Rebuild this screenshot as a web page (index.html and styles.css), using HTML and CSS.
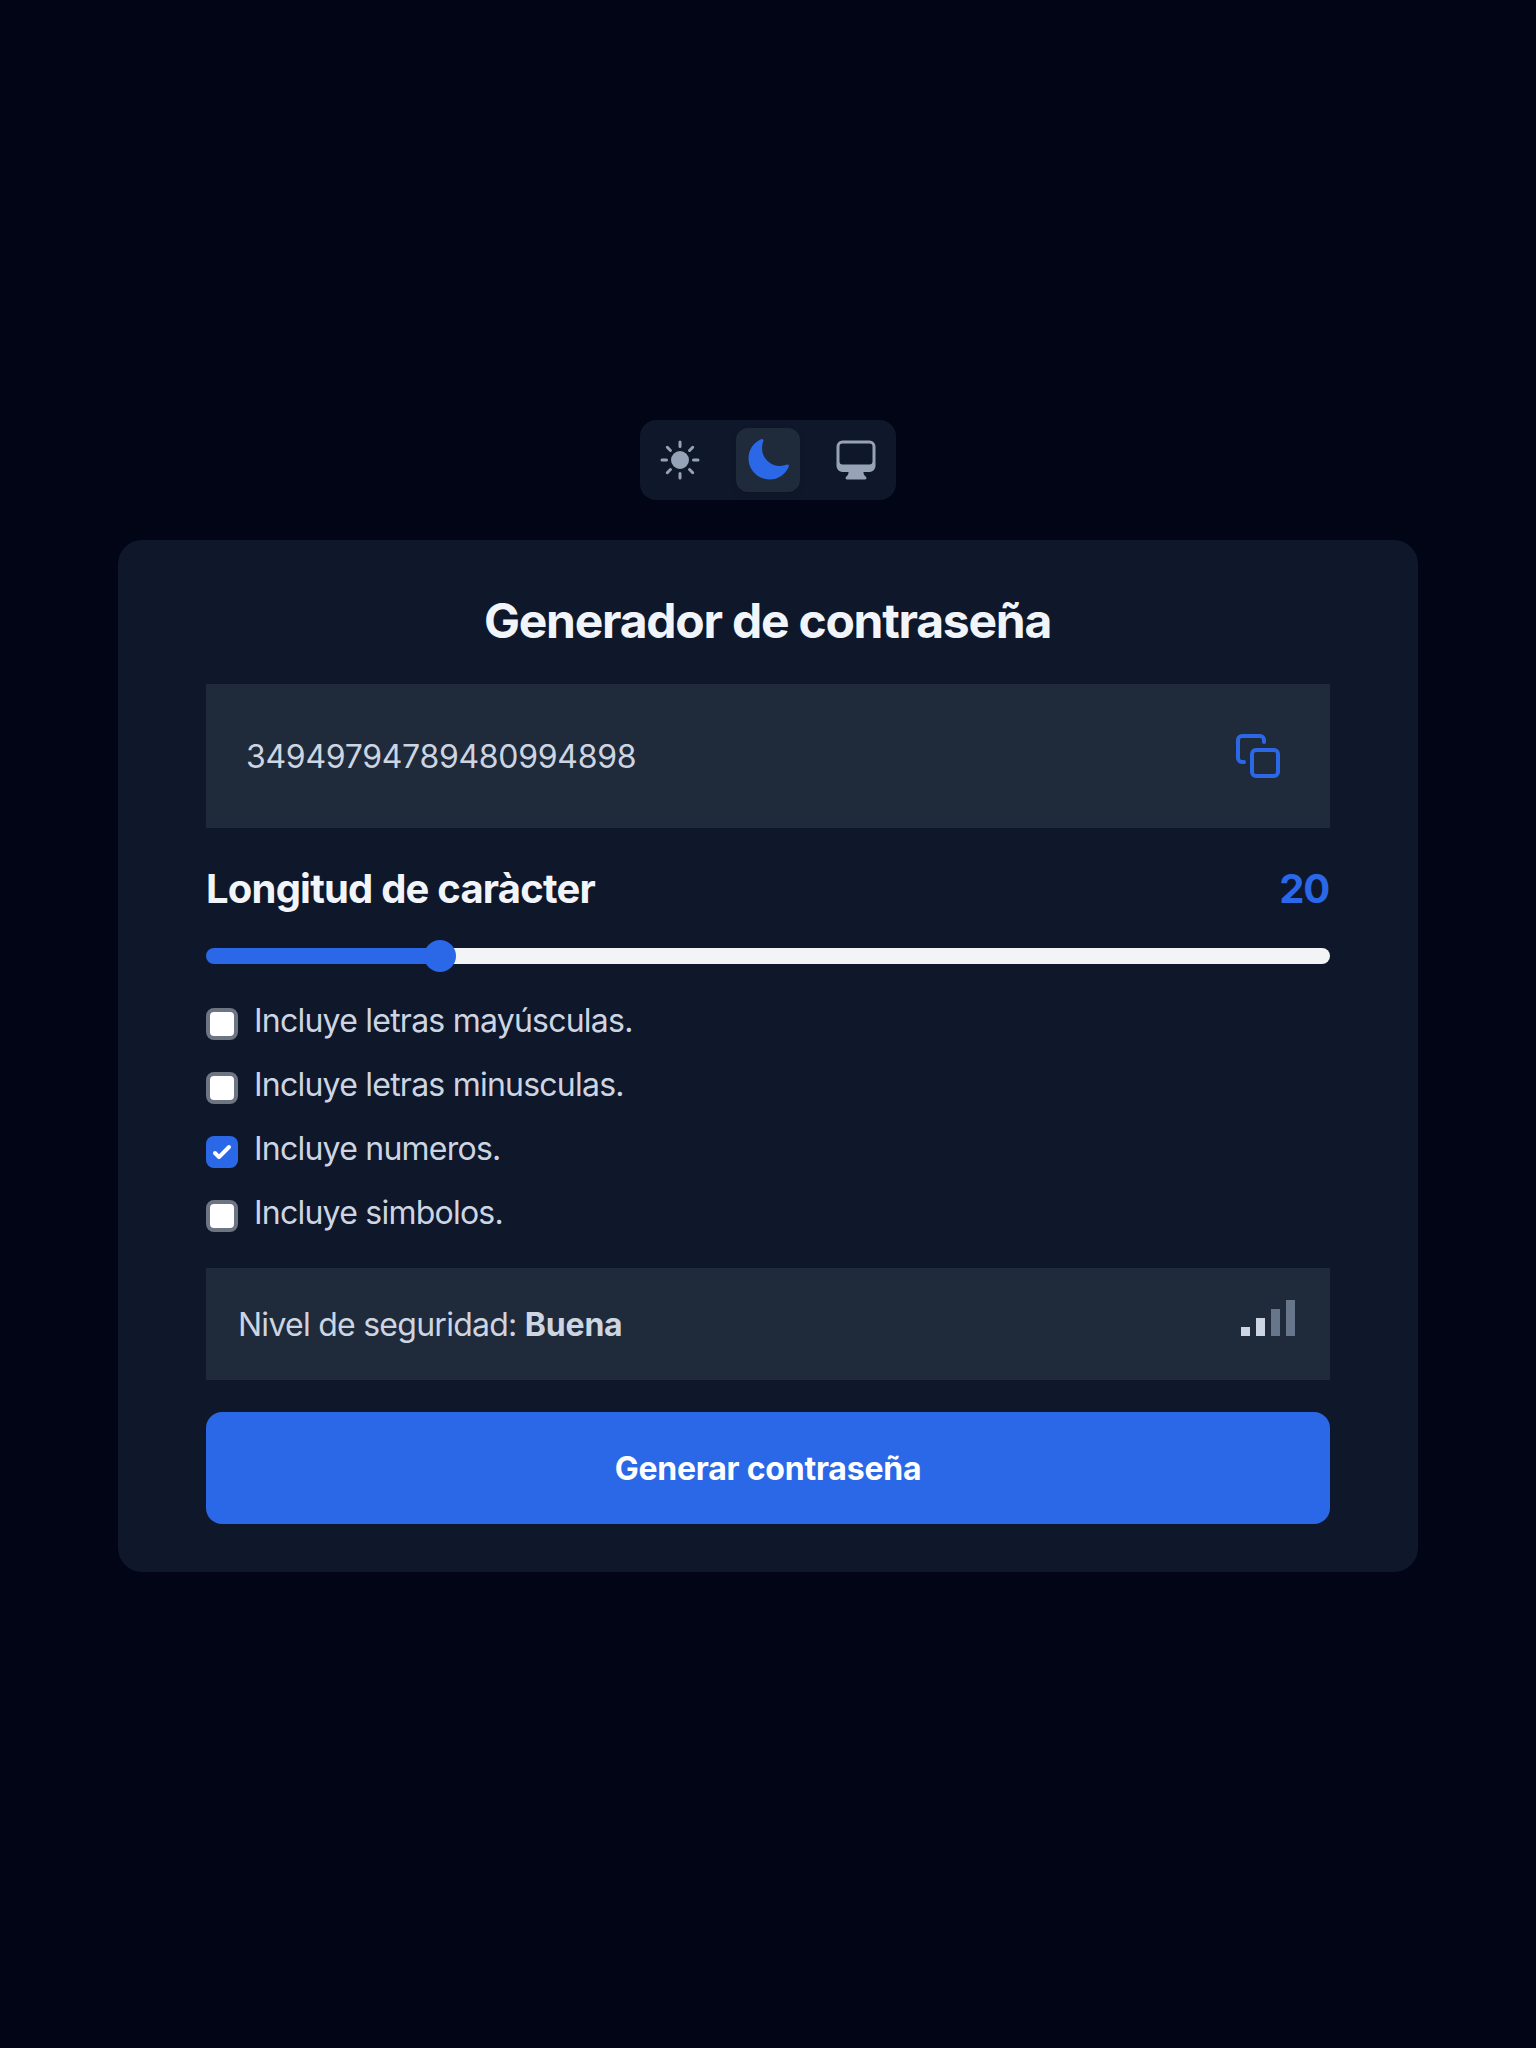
FILE: index.html
```html
<!DOCTYPE html>
<html lang="es">
<head>
<meta charset="utf-8">
<title>Generador de contraseña</title>
<link rel="stylesheet" href="styles.css">
</head>
<body>
<main class="page">
  <nav class="themes">
    <button class="theme" aria-label="Claro"><svg viewBox="0 0 24 24" fill="currentColor"><path d="M12 2.25a.75.75 0 0 1 .75.75v2.25a.75.75 0 0 1-1.5 0V3a.75.75 0 0 1 .75-.75ZM7.5 12a4.5 4.5 0 1 1 9 0 4.5 4.5 0 0 1-9 0ZM18.894 6.166a.75.75 0 0 0-1.06-1.06l-1.591 1.59a.75.75 0 1 0 1.06 1.061l1.591-1.59ZM21.75 12a.75.75 0 0 1-.75.75h-2.25a.75.75 0 0 1 0-1.5H21a.75.75 0 0 1 .75.75ZM17.834 18.894a.75.75 0 0 0 1.06-1.06l-1.59-1.591a.75.75 0 1 0-1.061 1.06l1.59 1.591ZM12 18a.75.75 0 0 1 .75.75V21a.75.75 0 0 1-1.5 0v-2.25A.75.75 0 0 1 12 18ZM7.758 17.303a.75.75 0 0 0-1.061-1.06l-1.591 1.59a.75.75 0 0 0 1.06 1.061l1.591-1.59ZM6 12a.75.75 0 0 1-.75.75H3a.75.75 0 0 1 0-1.5h2.25A.75.75 0 0 1 6 12ZM6.697 7.757a.75.75 0 0 0 1.06-1.06l-1.59-1.591a.75.75 0 0 0-1.061 1.06l1.59 1.591Z"/></svg></button>
    <button class="theme theme-active" aria-label="Oscuro"><svg viewBox="0 0 24 24" fill="currentColor"><path d="M9.528 1.718a.75.75 0 0 1 .162.819A8.97 8.97 0 0 0 9 6a9 9 0 0 0 9 9 8.97 8.97 0 0 0 3.463-.69.75.75 0 0 1 .981.98 10.503 10.503 0 0 1-9.694 6.46c-5.799 0-10.5-4.7-10.5-10.5 0-4.368 2.667-8.112 6.46-9.694a.75.75 0 0 1 .818.162Z"/></svg></button>
    <button class="theme" aria-label="Sistema"><svg viewBox="0 0 24 24" fill="currentColor" fill-rule="evenodd"><path d="M2.25 5.25a3 3 0 0 1 3-3h13.5a3 3 0 0 1 3 3V15a3 3 0 0 1-3 3h-3v.257c0 .597.237 1.17.659 1.591l.621.622a.75.75 0 0 1-.53 1.28h-9a.75.75 0 0 1-.53-1.28l.621-.622a2.25 2.25 0 0 0 .659-1.59V18h-3a3 3 0 0 1-3-3V5.25Zm1.5 0v7.5a1.5 1.5 0 0 0 1.5 1.5h13.5a1.5 1.5 0 0 0 1.5-1.5v-7.5a1.5 1.5 0 0 0-1.5-1.5H5.25a1.5 1.5 0 0 0-1.5 1.5Z"/></svg></button>
  </nav>

  <section class="card">
    <h1 class="title">Generador de contraseña</h1>

    <div class="password">
      <span class="password-text">34949794789480994898</span>
      <button class="copy" aria-label="Copiar"><svg viewBox="0 0 24 24" fill="none" stroke="currentColor" stroke-width="2" stroke-linecap="round" stroke-linejoin="round"><rect x="9" y="9" width="13" height="13" rx="2"/><path d="M5 15H4a2 2 0 0 1-2-2V4a2 2 0 0 1 2-2h9a2 2 0 0 1 2 2v1"/></svg></button>
    </div>

    <div class="length">
      <h2 class="length-label">Longitud de caràcter</h2>
      <span class="length-value">20</span>
    </div>
    <div class="slider"><div class="slider-fill" style="width: 250px"></div></div>

    <div class="options">
      <label class="option"><span class="box"></span><span class="option-text">Incluye letras mayúsculas.</span></label>
      <label class="option"><span class="box"></span><span class="option-text">Incluye letras minusculas.</span></label>
      <label class="option"><span class="box box-checked"><svg viewBox="0 0 16 16" fill="#fff"><path d="M12.207 4.793a1 1 0 0 1 0 1.414l-5 5a1 1 0 0 1-1.414 0l-2-2a1 1 0 0 1 1.414-1.414L6.5 9.086l4.293-4.293a1 1 0 0 1 1.414 0z"/></svg></span><span class="option-text">Incluye numeros.</span></label>
      <label class="option"><span class="box"></span><span class="option-text">Incluye simbolos.</span></label>
    </div>

    <div class="strength">
      <p class="strength-text">Nivel de seguridad: <strong>Buena</strong></p>
      <svg class="bars" viewBox="0 0 54 36"><g class="bar-on"><path d="M0 27h9v9H0z"/><path d="M15 18h9v18h-9z"/></g><g class="bar-off"><path d="M30 9h9v27h-9z"/><path d="M45 0h9v36h-9z"/></g></svg>
    </div>

    <button class="generate">Generar contraseña</button>
  </section>
</main>
</body>
</html>
```
FILE: styles.css
```css
* {
  box-sizing: border-box;
  margin: 0;
  padding: 0;
}

body {
  background: #010516;
  color: #cdd5e2;
  font-family: Inter, "Liberation Sans", sans-serif;
  font-size: 32px;
  line-height: 48px;
}

button {
  border: 0;
  background: none;
  font: inherit;
  color: inherit;
}

svg {
  display: block;
}

.page {
  min-height: 2048px;
  padding-top: 420px;
  display: flex;
  flex-direction: column;
  align-items: center;
  gap: 40px;
}

.themes {
  display: flex;
  gap: 24px;
  padding: 8px;
  border-radius: 16px;
  background: #0f172a;
}

.theme {
  padding: 8px;
  border-radius: 12px;
  color: #96a3b6;
}

.theme svg,
.copy svg {
  width: 48px;
  height: 48px;
}

.theme-active {
  background: #1f2a3b;
  color: #2b68e7;
  box-shadow: 0 2px 6px rgba(0, 0, 0, 0.1);
}

.card {
  width: 1300px;
  height: 1032px;
  padding: 48px 88px;
  border-radius: 24px;
  background: #0f172a;
}

.title {
  padding-right: 1px;
  font-size: 48px;
  line-height: 66px;
  font-weight: 700;
  letter-spacing: -1.25px;
  text-align: center;
  color: #f1f5fa;
}

.password {
  display: flex;
  align-items: center;
  justify-content: space-between;
  height: 144px;
  margin-top: 30px;
  padding: 0 48px 0 40px;
  background: #1f2a3b;
}

.password-text {
  padding-top: 2px;
  letter-spacing: -0.3px;
}

.copy {
  color: #2b68e7;
}

.length {
  display: flex;
  justify-content: space-between;
  margin-top: 32px;
  font-size: 40px;
  line-height: 58px;
}

.length-label {
  font-size: inherit;
  font-weight: 700;
  letter-spacing: -0.8px;
  color: #f1f5fa;
}

.length-value {
  padding-right: 1px;
  font-weight: 700;
  letter-spacing: -1.2px;
  color: #2b68e7;
}

.slider {
  height: 16px;
  margin-top: 30px;
  border-radius: 8px;
  background: linear-gradient(to right, #2b68e7 240px, #f3f4f6 240px);
}

.slider-fill {
  display: flex;
  align-items: center;
  justify-content: flex-end;
  height: 16px;
}

.slider-fill::after {
  content: "";
  flex: none;
  width: 32px;
  height: 32px;
  border-radius: 50%;
  background: #2b68e7;
}

.options {
  display: flex;
  flex-direction: column;
  gap: 16px;
  margin-top: 32px;
}

.option {
  display: flex;
  gap: 16px;
  height: 48px;
}

.option-text {
  padding-top: 1px;
  letter-spacing: -0.77px;
}

.box {
  width: 32px;
  height: 32px;
  margin-top: 12px;
  border: 4px solid #6d7482;
  border-radius: 8px;
  background: #fff;
}

.box-checked {
  border: 0;
  background: #2b68e7;
}

.strength {
  display: flex;
  align-items: center;
  justify-content: space-between;
  height: 112px;
  margin-top: 32px;
  padding: 0 35px 0 32px;
  background: #1f2a3b;
}

.strength-text {
  padding-top: 2px;
  letter-spacing: -0.74px;
}

.strength-text strong {
  font-weight: 700;
  letter-spacing: -0.2px;
}

.bars {
  width: 54px;
  height: 36px;
  margin-bottom: 12.6px;
}

.bar-on {
  fill: #cdd5e2;
}

.bar-off {
  fill: #67768a;
}

.generate {
  display: block;
  width: 100%;
  height: 112px;
  margin-top: 32px;
  padding-top: 2px;
  border-radius: 16px;
  background: #2b68e7;
  color: #fff;
  font-weight: 700;
  letter-spacing: -0.22px;
}
```
